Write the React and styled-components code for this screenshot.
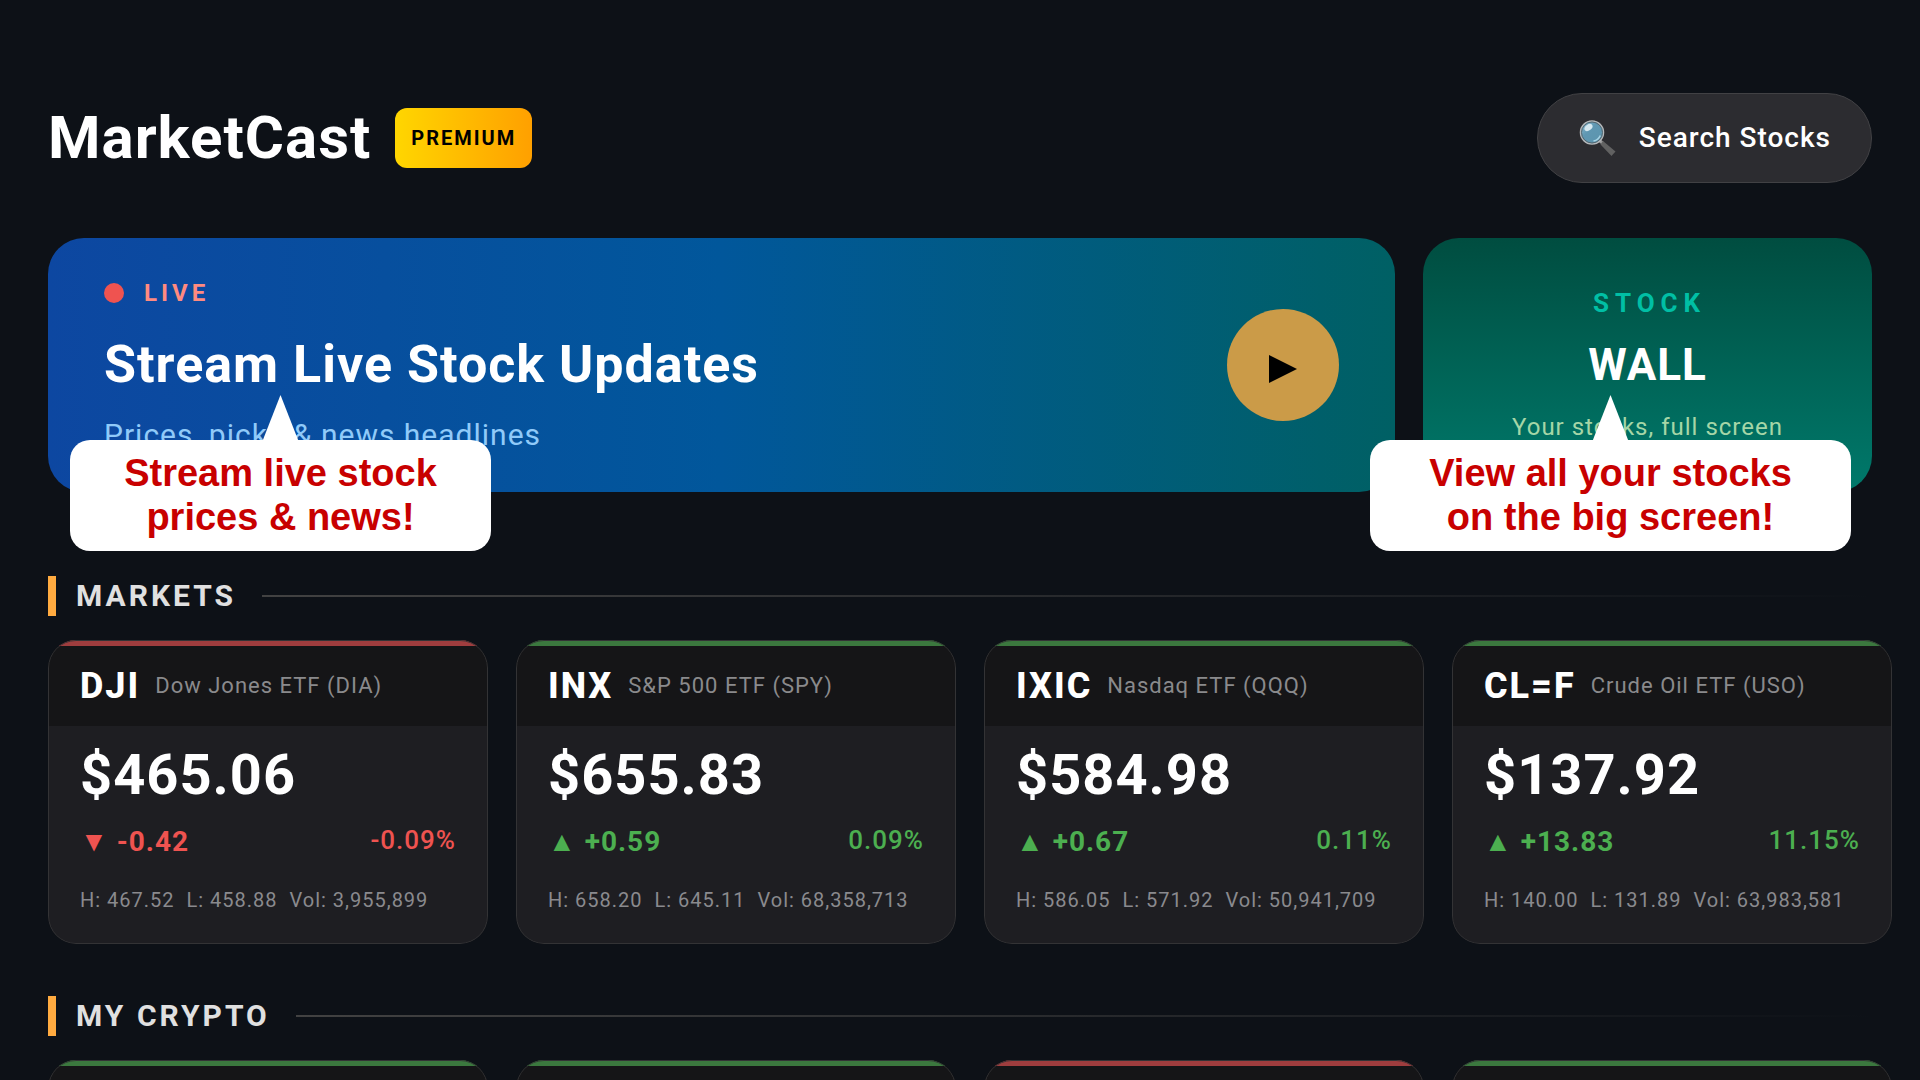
import React from "react";
import styled, { createGlobalStyle } from "styled-components";

const GlobalStyle = createGlobalStyle`
  *, *::before, *::after { box-sizing: border-box; }
  body {
    margin: 0;
    background: #0d1117;
    color: #fff;
    font-family: Roboto, "Liberation Sans", sans-serif;
  }
  h1, h2, h3, p { margin: 0; }
`;

const Page = styled.div`
  height: 100vh;
  overflow: hidden;
  padding: 93px 48px 0;
`;

const Header = styled.header`
  display: flex;
  align-items: center;
  justify-content: space-between;
  margin-bottom: 55px;
`;

const Brand = styled.div`
  display: flex;
  align-items: center;
  gap: 24px;
`;

const AppName = styled.h1`
  font-size: 60px;
  line-height: 72px;
  font-weight: 700;
  letter-spacing: 1px;
`;

const Badge = styled.span`
  padding: 0 16px;
  border-radius: 12px;
  background: linear-gradient(90deg, #ffd600, #ffa000);
  color: #000;
  font-size: 20px;
  line-height: 60px;
  font-weight: 700;
  letter-spacing: 2px;
`;

const SearchButton = styled.button`
  display: flex;
  align-items: center;
  gap: 23px;
  height: 90px;
  padding: 0 40px;
  border: 1px solid #414144;
  border-radius: 45px;
  background: #2c2c30;
  color: #fff;
  font: 500 28px/36px Roboto, "Liberation Sans", sans-serif;
  letter-spacing: 1px;
`;

const Banners = styled.div`
  display: grid;
  grid-template-columns: 3fr 1fr;
  gap: 28px;
  margin-bottom: 84px;
`;

const Banner = styled.section`
  position: relative;
  display: flex;
  height: 254px;
  border-radius: 36px;
`;

const LiveBanner = styled(Banner)`
  align-items: center;
  justify-content: space-between;
  padding: 0 56px;
  background: linear-gradient(90deg, #0d47a1, #01579b 50%, #006064);
`;

const WallBanner = styled(Banner)`
  flex-direction: column;
  align-items: center;
  justify-content: center;
  background: linear-gradient(180deg, #004d40, #00796b);
`;

const LiveTag = styled.div`
  display: flex;
  align-items: center;
  gap: 20px;
  margin-bottom: 24px;
  color: #ff8a80;
  font-size: 24px;
  line-height: 32px;
  font-weight: 700;
  letter-spacing: 4px;
`;

const Dot = styled.span`
  width: 20px;
  height: 20px;
  border-radius: 50%;
  background: #ef5350;
`;

const LiveTitle = styled.h2`
  font-size: 52px;
  line-height: 64px;
  font-weight: 700;
  letter-spacing: 1px;
`;

const LiveText = styled.p`
  margin-top: 20px;
  color: #90caf9;
  font-size: 30px;
  line-height: 36px;
  letter-spacing: 1px;
`;

const PlayButton = styled.button`
  display: grid;
  place-items: center;
  width: 112px;
  height: 112px;
  padding: 8px 0 0;
  border: 0;
  border-radius: 50%;
  background: #cb9b48;
`;

const WallTag = styled.p`
  padding-left: 4px;
  color: #00bfa5;
  font-size: 26px;
  line-height: 32px;
  font-weight: 700;
  letter-spacing: 6px;
`;

const WallTitle = styled.h2`
  margin: 20px 0;
  font-size: 44px;
  line-height: 52px;
  font-weight: 700;
  letter-spacing: 1px;
`;

const WallText = styled.p`
  color: #a5d6a7;
  font-size: 24px;
  line-height: 32px;
  letter-spacing: 1px;
`;

const Callout = styled.aside`
  position: absolute;
  top: 202px;
  left: ${(p) => p.$left};
  width: ${(p) => p.$width};
  padding: 11px 0 12px;
  border-radius: 20px;
  background: #fff;
  color: #c80000;
  font: 700 38px/44px "Liberation Sans", Arial, sans-serif;
  text-align: center;
  white-space: pre-line;

  &::before {
    content: "";
    position: absolute;
    bottom: 100%;
    left: calc(50% - 18px);
    width: 36px;
    height: 46px;
    margin-bottom: -1px;
    background: #fff;
    clip-path: polygon(50% 0, 100% 100%, 0 100%);
  }
`;

const Group = styled.section`
  margin-bottom: 52px;
`;

const GroupHead = styled.div`
  display: flex;
  align-items: center;
  gap: 20px;
  margin-bottom: 24px;

  &::before {
    content: "";
    width: 8px;
    height: 40px;
    background: #ffab40;
  }

  &::after {
    content: "";
    flex: 1;
    height: 2px;
    margin-left: 6px;
    background: linear-gradient(90deg, #424242, transparent);
  }
`;

const GroupTitle = styled.h2`
  color: #e0e0e0;
  font-size: 30px;
  line-height: 40px;
  font-weight: 700;
  letter-spacing: 3px;
`;

const Cards = styled.div`
  display: flex;
  gap: 28px;
`;

const Card = styled.article`
  position: relative;
  flex: 0 0 440px;
  min-height: 304px;
  border-radius: 28px;
  overflow: hidden;
  background: #1e1e22;

  &::after {
    content: "";
    position: absolute;
    inset: 0;
    border: 1px solid #333335;
    border-radius: 28px;
  }
`;

const CardHead = styled.header`
  display: flex;
  align-items: center;
  gap: 15px;
  height: 86px;
  padding: 0 32px;
  border-top: 6px solid ${(p) => (p.$up ? "#3b783e" : "#9f3d3e")};
  background: #151517;
`;

const Symbol = styled.h3`
  font-size: 36px;
  line-height: 44px;
  font-weight: 800;
  letter-spacing: 2px;
`;

const Name = styled.span`
  color: #8a8a8c;
  font-size: 22px;
  line-height: 28px;
  letter-spacing: 1px;
`;

const CardBody = styled.div`
  padding: 16px 32px 30px;
`;

const Price = styled.p`
  font-size: 56px;
  line-height: 66px;
  font-weight: 700;
  letter-spacing: 1px;
`;

const Move = styled.div`
  display: flex;
  justify-content: space-between;
  margin-top: 16px;
  color: ${(p) => (p.$up ? "#4caf50" : "#ef5350")};
`;

const Change = styled.span`
  font-size: 28px;
  line-height: 36px;
  font-weight: 700;
  letter-spacing: 1px;
`;

const Percent = styled.span`
  font-size: 26px;
  line-height: 32px;
  font-weight: 500;
  letter-spacing: 1px;
`;

const Range = styled.p`
  margin-top: 26px;
  color: #8a8a8e;
  font-size: 20px;
  line-height: 28px;
  letter-spacing: 1px;
  white-space: pre;
`;

const markets = [
  { symbol: "DJI", name: "Dow Jones ETF (DIA)", price: "$465.06", change: "-0.42", percent: "-0.09%", high: "467.52", low: "458.88", volume: "3,955,899", up: false },
  { symbol: "INX", name: "S&P 500 ETF (SPY)", price: "$655.83", change: "+0.59", percent: "0.09%", high: "658.20", low: "645.11", volume: "68,358,713", up: true },
  { symbol: "IXIC", name: "Nasdaq ETF (QQQ)", price: "$584.98", change: "+0.67", percent: "0.11%", high: "586.05", low: "571.92", volume: "50,941,709", up: true },
  { symbol: "CL=F", name: "Crude Oil ETF (USO)", price: "$137.92", change: "+13.83", percent: "11.15%", high: "140.00", low: "131.89", volume: "63,983,581", up: true },
];

const crypto = [{ up: true }, { up: true }, { up: false }, { up: true }];

function SearchIcon() {
  return (
    <svg width="38" height="38" viewBox="0 0 38 38" aria-hidden="true">
      <defs>
        <linearGradient id="glass" x1="0" y1="0" x2="1" y2="1">
          <stop offset="0" stopColor="#8fc0d6" />
          <stop offset="0.4" stopColor="#5f97b2" />
          <stop offset="1" stopColor="#5b94ad" />
        </linearGradient>
      </defs>
      <path d="M21.500 21.500 L25 24.500" stroke="#9a9a9a" strokeWidth="3" />
      <path d="M25 22 L37.500 32.500 L33.500 37 L22.500 25.500 Z" fill="#616161" />
      <circle cx="14" cy="13.500" r="11.500" fill="url(#glass)" stroke="#b5b8ba" strokeWidth="1.500" />
      <circle cx="14" cy="13.500" r="10.500" fill="none" stroke="#54666f" strokeWidth="1" />
      <ellipse cx="10.500" cy="8.500" rx="4.500" ry="3" fill="#d5e8f0" transform="rotate(-38 10.500 8.500)" />
      <path d="M15.500 22 Q20.500 21 22.300 16.500" stroke="#a6d3e4" strokeWidth="1.500" fill="none" />
    </svg>
  );
}

function MarketCard({ item }) {
  return (
    <Card>
      <CardHead $up={item.up}>
        <Symbol>{item.symbol}</Symbol>
        <Name>{item.name}</Name>
      </CardHead>
      <CardBody>
        <Price>{item.price}</Price>
        <Move $up={item.up}>
          <Change>{`${item.up ? "▲" : "▼"} ${item.change}`}</Change>
          <Percent>{item.percent}</Percent>
        </Move>
        <Range>{`H: ${item.high}  L: ${item.low}  Vol: ${item.volume}`}</Range>
      </CardBody>
    </Card>
  );
}

export default function App() {
  return (
    <>
      <GlobalStyle />
      <Page>
        <Header>
          <Brand>
            <AppName>MarketCast</AppName>
            <Badge>PREMIUM</Badge>
          </Brand>
          <SearchButton type="button">
            <SearchIcon />
            Search Stocks
          </SearchButton>
        </Header>

        <Banners>
          <LiveBanner>
            <div>
              <LiveTag><Dot />LIVE</LiveTag>
              <LiveTitle>Stream Live Stock Updates</LiveTitle>
              <LiveText>Prices, picks &amp; news headlines</LiveText>
            </div>
            <PlayButton type="button" aria-label="Play">
              <svg width="28" height="28" viewBox="0 0 28 28" aria-hidden="true">
                <path d="M0 0 L28 14 L0 28 Z" fill="#000" />
              </svg>
            </PlayButton>
            <Callout $left="22px" $width="421px">{"Stream live stock\nprices & news!"}</Callout>
          </LiveBanner>
          <WallBanner>
            <WallTag>STOCK</WallTag>
            <WallTitle>WALL</WallTitle>
            <WallText>Your stocks, full screen</WallText>
            <Callout $left="-53px" $width="481px">{"View all your stocks\non the big screen!"}</Callout>
          </WallBanner>
        </Banners>

        <main>
          <Group>
            <GroupHead><GroupTitle>MARKETS</GroupTitle></GroupHead>
            <Cards>
              {markets.map((item) => <MarketCard key={item.symbol} item={item} />)}
            </Cards>
          </Group>
          <Group>
            <GroupHead><GroupTitle>MY CRYPTO</GroupTitle></GroupHead>
            <Cards>
              {crypto.map((item, i) => <Card key={i}><CardHead $up={item.up} /></Card>)}
            </Cards>
          </Group>
        </main>
      </Page>
    </>
  );
}
